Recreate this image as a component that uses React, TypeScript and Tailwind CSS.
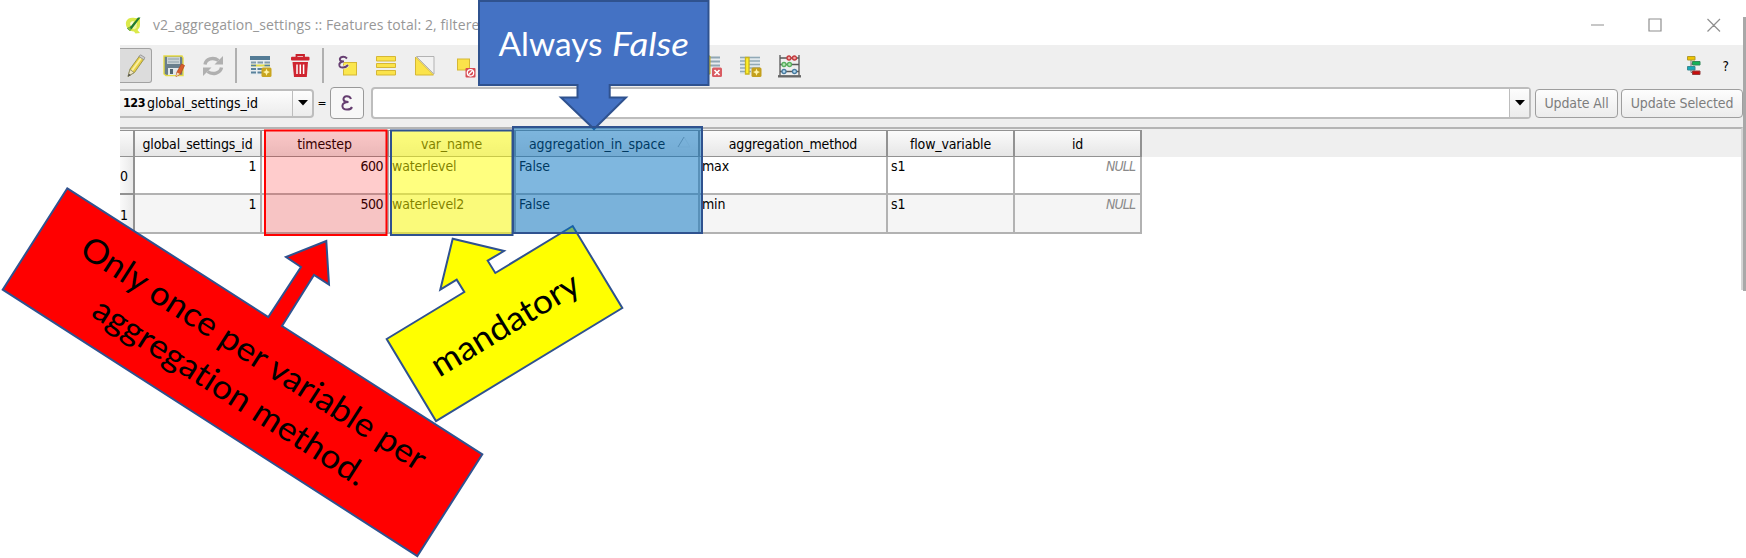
import type { ReactNode } from "react";

const UI = "font-['DejaVu_Sans_Condensed','DejaVu_Sans',sans-serif]";

function Icon({ className = "", children }: { className?: string; children: ReactNode }) {
  return (
    <svg viewBox="0 0 24 24" className={`h-6 w-6 shrink-0 ${className}`} fill="none">
      {children}
    </svg>
  );
}

function Separator({ className = "" }: { className?: string }) {
  return <div className={`h-[35px] w-[2px] shrink-0 bg-[#b0b0b0] ${className}`} />;
}

function TitleBar() {
  return (
    <div className="flex h-[45px] items-center pt-[5px]">
      <svg viewBox="0 0 16 17" className="ml-[5px] h-[17px] w-4 shrink-0">
        <path d="M1 5C2 1 6 0 10 1L15 1 15 8C15 11 13 12 12.500 13L15 16 10.500 16.500 9 14.500C4 14.500 0 10 1 5Z" fill="#dbe94a" />
        <path d="M5 7C5 5 7 4 9 4L6.500 10Z" fill="#f8fcd8" />
        <path d="M7 11 12 5 11.500 11 9 12.500Z" fill="#f0f7a0" />
        <path d="M2 11.500 6 9 13 .5 15.500 .5 7.500 11 5 14Z" fill="#1f7a34" />
        <path d="M2.500 11 5 10 6 12.500 4.500 14Z" fill="#8fc13a" />
      </svg>
      <span className="ml-[12px] whitespace-nowrap font-['Open_Sans','Noto_Sans',sans-serif] text-[14px] leading-[18px] tracking-[0.1px] text-[#979797]">
        v2_aggregation_settings :: Features total: 2, filtered
      </span>
      <svg viewBox="0 0 130 14" className="ml-auto mr-[22px] h-[14px] w-[130px]" fill="none" stroke="#8f8f8f" strokeWidth="1.2">
        <path d="M0 7H13M58 1H70V13H58ZM116.5 1 129 13.5M129 1 116.5 13.5" />
      </svg>
    </div>
  );
}

function Toolbar() {
  return (
    <div className="flex h-[41px] items-center">
      <div className="flex h-[35px] w-8 shrink-0 items-center justify-center rounded-r-[3px] border border-l-0 border-[#a2a2a2] bg-[#dcdcdc]">
        <Icon>
          <path d="M4 22.500 6 15 15.500 2 20 5 10.500 18.500Z" fill="#e6cf46" stroke="#8c8439" strokeWidth=".8" />
          <path d="M8 16.500 17.500 3.500" stroke="#f9efa0" strokeWidth="2" />
          <path d="M15 2.500 16.500 .8 20.800 3.500 19.800 5.800Z" fill="#cdcdcd" stroke="#8b8b8b" strokeWidth=".8" />
          <path d="M4 22.500 6 15.500 10 18.500Z" fill="#efe5c4" stroke="#8d8d70" strokeWidth=".8" />
          <path d="M4 22.500 4.800 19.800 6.800 21Z" fill="#444" />
        </Icon>
      </div>
      <Icon className="ml-[10px]">
        <path d="M2 2H20L21 4V21.500H4L2 20Z" fill="#697f8d" stroke="#e6db45" strokeWidth="1.400" />
        <path d="M5 3H18V10H5Z" fill="#c9d2d5" />
        <path d="M6 5H17M6 8H17" stroke="#8ea1aa" />
        <path d="M6 14H17V21H6Z" fill="#e2e8ea" />
        <path d="M8 15H11V20H8Z" fill="#52656f" />
        <path d="M14 22.500 15 18 19.500 10 22.500 11.500 18.500 20Z" fill="#d75d2b" stroke="#b64a22" strokeWidth=".8" />
        <path d="M14 22.500 15 18.500 18 20Z" fill="#f1dfb6" />
      </Icon>
      <Icon className="ml-[15px]">
        <path d="M4 10.500C5 5 12 2.500 17.500 6.500" stroke="#b0b0b0" strokeWidth="3.400" />
        <path d="M22 2V10.500H13.500Z" fill="#b0b0b0" />
        <path d="M20.500 13.500C19.500 19 12 21.500 6.500 17.500" stroke="#b0b0b0" strokeWidth="3.400" />
        <path d="M2 22V13.500H10.500Z" fill="#b0b0b0" />
      </Icon>
      <Separator className="ml-[10px]" />
      <Icon className="ml-[12px]">
        <path d="M1 2H21V21H1Z" fill="#e8edf0" />
        <path d="M1 2H21V6H1Z" fill="#547b95" />
        <path d="M2 8.500H7M8.500 8.500H14M15.500 8.500H21" stroke="#819cab" strokeWidth="1.800" />
        <path d="M2 11.500H21" stroke="#e3dc4a" strokeWidth="2" />
        <path d="M2 11.500H7M15.500 11.500H21" stroke="#59829c" strokeWidth="1.600" />
        <path d="M2 15H7M8.500 15H13M2 18.500H7M8.500 18.500H13" stroke="#59829c" strokeWidth="2.200" />
        <rect x="12.500" y="13.500" width="10" height="9.500" rx="1.500" fill="#c9a51f" />
        <path d="M17.500 14.500 18.500 17 21 18 18.500 19.200 17.500 21.800 16.500 19.200 14 18 16.500 17Z" fill="#fff4a8" />
      </Icon>
      <Icon className="ml-[15px]">
        <path d="M8.500 3V1H16V3" stroke="#c8202b" strokeWidth="1.800" />
        <rect x="3" y="2.800" width="18.500" height="3.700" rx="1" fill="#cf2530" />
        <path d="M4.500 8H20L18.800 23H6Z" fill="#cf2530" />
        <path d="M9 10.500V20M12.300 10.500V20M15.600 10.500V20" stroke="#fff" strokeWidth="1.500" />
      </Icon>
      <Separator className="ml-[10px]" />
      <Icon className="ml-[12px]">
        <rect x="7.500" y="8.500" width="13" height="12.500" fill="#fbe74e" stroke="#d5b735" />
        <path d="M11 4.500C8 1.500 3 3 4 6 4.500 7.500 6.500 7.500 8 7.500 5 7.500 2.500 9 3.500 12 4.500 14.500 9.500 14 12 11" stroke="#f0f0f0" strokeWidth="3.400" />
        <path d="M11 4.500C8 1.500 3 3 4 6 4.500 7.500 6.500 7.500 8 7.500 5 7.500 2.500 9 3.500 12 4.500 14.500 9.500 14 12 11" stroke="#673f72" strokeWidth="2" />
      </Icon>
      <Icon className="ml-[14px]">
        <path d="M2.500 2.500H21.500V7H2.500ZM2.500 9.500H21.500V13.500H2.500ZM2.500 16.500H21.500V21H2.500Z" fill="#fbe34a" stroke="#d5b735" />
      </Icon>
      <Icon className="ml-[15px]">
        <path d="M3.500 2.500H21V20Z" fill="#f2f2f2" stroke="#b3b3b3" />
        <path d="M2.500 3V21H20.500Z" fill="#fbe34a" stroke="#d5b735" />
      </Icon>
      <Icon className="ml-[17px]">
        <rect x="3.500" y="5" width="12" height="11" fill="#fbe34a" stroke="#d5b735" />
        <rect x="11.500" y="14" width="10" height="9.500" rx="1" fill="#d84b53" />
        <circle cx="16.500" cy="18.800" r="3.200" stroke="#fff" strokeWidth="1.300" />
        <path d="M14.500 20.800 18.500 16.800" stroke="#fff" strokeWidth="1.300" />
      </Icon>
      <Icon className="ml-[222px]">
        <path d="M1 2H20V21H1Z" fill="#e8edf0" />
        <path d="M9 3.500H20M9 7.500H20M9 11.500H20" stroke="#91a7b4" strokeWidth="2" />
        <path d="M6 2H10V20H6Z" fill="#fbe32e" stroke="#bda91f" />
        <rect x="12" y="13.500" width="10" height="9.500" rx="1.500" fill="#d95c62" />
        <path d="M14.500 16 19.500 21M19.500 16 14.500 21" stroke="#fff" strokeWidth="1.700" />
      </Icon>
      <Icon className="ml-[15px]">
        <path d="M1 2.500H21V20H1Z" fill="#e0e8ec" />
        <path d="M1 3.500H21M1 7H21M1 10.500H21M1 14H21M1 17.500H12" stroke="#91a9b6" strokeWidth="1.400" />
        <path d="M6.500 3.500H10V20H6.500Z" fill="#fff02b" stroke="#c8b321" strokeWidth="1.300" />
        <rect x="12.500" y="13.500" width="10" height="9.500" rx="1.500" fill="#c4a01d" />
        <path d="M17.500 14.500 18.500 17 21 18 18.500 19.200 17.500 21.800 16.500 19.200 14 18 16.500 17Z" fill="#fff4a8" />
      </Icon>
      <Icon className="ml-[14px]">
        <path d="M3 1V22M22 1V22M3 4H22M3 10.500H22M3 17.500H22" stroke="#585858" strokeWidth="1.300" />
        <path d="M1 22.300H24" stroke="#666" strokeWidth="2.400" />
        <g strokeWidth="1.300">
          <path d="M10 4a2 2 0 1 0 4 0a2 2 0 1 0-4 0M15.500 4a2 2 0 1 0 4 0a2 2 0 1 0-4 0" fill="#f2a5a5" stroke="#c3393c" />
          <path d="M5 10.500a2 2 0 1 0 4 0a2 2 0 1 0-4 0M10.500 10.500a2 2 0 1 0 4 0a2 2 0 1 0-4 0" fill="#b5eab5" stroke="#59af5e" />
          <path d="M5 17.500a2 2 0 1 0 4 0a2 2 0 1 0-4 0M15.500 17.500a2 2 0 1 0 4 0a2 2 0 1 0-4 0" fill="#b8dcf2" stroke="#487ba0" />
        </g>
      </Icon>
      <Icon className="ml-auto">
        <path d="M9 5V18.500H16M9 10H14" stroke="#777" />
        <path d="M5.500 2.500H13V6H5.500Z" fill="#efc400" stroke="#b19b2c" />
        <path d="M10.500 7.500H18V11H10.500Z" fill="#12b357" stroke="#33875a" />
        <path d="M5.500 12.500H13V16H5.500Z" fill="#16a9b8" stroke="#3b8a91" />
        <path d="M10.500 17H18V20.500H10.500Z" fill="#c80c0c" stroke="#943c3c" />
      </Icon>
      <span className={`${UI} ml-[17px] mr-[14px] text-[13.5px] leading-4 text-black`}>?</span>
    </div>
  );
}

function Caret() {
  return (
    <svg viewBox="0 0 10 6" className="h-[6px] w-[10px]">
      <path d="M0 0H10L5 5.500Z" fill="#000" />
    </svg>
  );
}

function FieldBar() {
  const grad = "bg-linear-to-b from-[#fdfdfd] to-[#ececec]";
  return (
    <div className={`${UI} flex h-[34px] items-center text-[14px]`}>
      <div className={`flex h-[29px] w-[194px] shrink-0 rounded-r-[4px] border-2 border-l-0 border-[#bdbdbd] ${grad}`}>
        <span className="flex w-[172px] items-center whitespace-nowrap pl-[3px]">
          <b className="mr-[2px] text-[12.5px] tracking-[-0.5px]">123</b>
          <span className="tracking-[-0.1px]">global_settings_id</span>
        </span>
        <span className="flex grow items-center justify-center border-l border-[#bdbdbd]">
          <Caret />
        </span>
      </div>
      <span className="ml-[2px] w-[14px] text-center text-[12px]">=</span>
      <div className="ml-[2px] flex h-[32px] w-[34px] shrink-0 items-center justify-center rounded-[4px] border border-[#999] bg-[#f7f7f7]">
        <svg viewBox="0 0 12 16" className="h-4 w-3" fill="none" stroke="#653e70" strokeWidth="2">
          <path d="M10 4C8.500 0 2 .5 2.500 4.500 2.800 6.500 5 7 7.500 7 4 7 1 8.500 1.500 11.500 2 15.500 9.500 15.500 11 12" />
        </svg>
      </div>
      <div className="ml-[7px] flex h-[32px] w-[1160px] shrink-0 rounded-[4px] border-2 border-[#bdbdbd] bg-white">
        <span className={`ml-auto flex w-[20px] items-center justify-center border-l border-[#bdbdbd] ${grad}`}>
          <Caret />
        </span>
      </div>
      <button className={`ml-[4px] h-[29px] w-[83px] shrink-0 whitespace-nowrap rounded-[4px] border-[1.5px] border-[#9e9e9e] tracking-[-0.1px] text-[#7d7d7d] ${grad}`}>
        Update All
      </button>
      <button className={`ml-[3px] h-[29px] w-[122px] shrink-0 whitespace-nowrap rounded-[4px] border-[1.5px] border-[#9e9e9e] tracking-[-0.1px] text-[#7d7d7d] ${grad}`}>
        Update Selected
      </button>
    </div>
  );
}

const columns = "grid grid-cols-[15px_127px_127px_127px_184px_188px_127px_127px]";
const headers = ["", "global_settings_id", "timestep", "var_name", "aggregation_in_space", "aggregation_method", "flow_variable", "id"];
const rows = [
  ["0", "1", "600", "waterlevel", "False", "max", "s1", "NULL"],
  ["1", "1", "500", "waterlevel2", "False", "min", "s1", "NULL"],
];

function Table() {
  return (
    <div className={`${UI} flex h-[163px] flex-col border-t-2 border-r-2 border-t-[#b5b5b5] border-r-[#d5d5d5] bg-white text-[14px] leading-4 tracking-[-0.15px] text-black`}>
      <div className="bg-[#efefef] pt-px">
        <div className={`${columns} h-[27px] w-[1022px]`}>
          {headers.map((h, i) => (
            <div key={h} className="flex items-center justify-center whitespace-nowrap border-y-[1.5px] border-r-2 border-[#929292] bg-linear-to-b from-[#fbfbfb] to-[#e6e6e6]">
              {i === 4 ? <span className="tracking-[-0.05px]">{h}</span> : h}
              {i === 4 && (
                <svg viewBox="0 0 14 12" className="-mr-[6px] mb-[4px] ml-[12px] h-3 w-[14px]" fill="none">
                  <path d="M7 1 13 11H1" stroke="#e4e4e4" />
                  <path d="M1 11 7 1" stroke="#aaa" />
                </svg>
              )}
            </div>
          ))}
        </div>
      </div>
      {rows.map((row, r) => (
        <div key={r} className={`${columns} w-[1022px] ${r === 0 ? "h-[38px]" : "h-[39px] bg-[#f5f5f5]"}`}>
          {row.map((v, c) =>
            c === 0 ? (
              <div key={c} className="flex items-center border-r-2 border-b-2 border-[#929292] bg-linear-to-r from-[#fafafa] to-[#e9e9e9] pt-[2px]">
                {v}
              </div>
            ) : (
              <div
                key={c}
                className={`border-r-2 border-b-2 border-[#b2b2b2] pt-px ${
                  c === 7 ? "pr-[5px] text-right tracking-[-0.9px] text-[#8a8a8a] italic" : c < 3 ? "pr-[4px] text-right tracking-[-0.5px]" : c === 5 ? "pl-[2px]" : "pl-[3px]"
                }`}
              >
                {v}
              </div>
            ),
          )}
        </div>
      ))}
    </div>
  );
}

function Annotations() {
  const outline = { stroke: "#2f528f", strokeWidth: 2 };
  return (
    <svg viewBox="0 0 1746 558" className="pointer-events-none absolute inset-0 h-[558px] w-[1746px] font-[Lato,sans-serif] text-[33.5px] [font-variant-ligatures:none]">
      <rect x="265" y="130.500" width="121.500" height="104.500" fill="#ff0000" fillOpacity=".2" stroke="#ff0000" strokeWidth="2" />
      <rect x="391" y="130.500" width="121.500" height="104.500" fill="#ffff00" fillOpacity=".5" {...outline} />
      <path d="M67.300 188.300 268.300 317 301 267 286 257 326.300 241 329 284.700 314 275 282 326 482.300 454.300 417.300 556 2.700 289.700Z" fill="#ff0000" {...outline} />
      <path d="M386.700 339 464.300 292 456.700 279.700 440.300 289.700 452.700 238.700 504 251 487.700 260.700 495.300 273 572.700 226 622.300 308 436 421Z" fill="#ffff00" {...outline} />
      <path d="M479 1H708.500V85H609.700V97.500H626L594 129 561 97.500H577.500V85H479Z" fill="#4472c4" {...outline} />
      <rect x="513" y="127" width="189" height="106" fill="#0070c0" fillOpacity=".5" {...outline} />
      <g transform="translate(80.100 255.700) rotate(32.660)">
        <text x="-2.500" y="0" textLength="403" lengthAdjust="spacingAndGlyphs">Only once per variable per</text>
      </g>
      <g transform="translate(91.600 316.600) rotate(32.660)">
        <text x="-2" y="0" textLength="318" lengthAdjust="spacingAndGlyphs">aggregation method.</text>
      </g>
      <g transform="translate(439.500 376.500) rotate(-31.280)">
        <text x="-1" y="1" textLength="168" lengthAdjust="spacingAndGlyphs">mandatory</text>
      </g>
      <text x="498.500" y="55.500" textLength="104" lengthAdjust="spacingAndGlyphs" fill="#fff">Always</text>
      <text x="612" y="55.500" textLength="77" lengthAdjust="spacingAndGlyphs" fill="#fff" fontStyle="italic">False</text>
    </svg>
  );
}

export default function App() {
  return (
    <div className="relative h-[558px] w-[1746px] overflow-hidden bg-white">
      <div className="ml-[120px] flex h-[291px] w-[1626px]">
        <div className="flex w-[1623px] flex-col">
          <TitleBar />
          <div className="h-[82px] bg-[#efefef]">
            <Toolbar />
            <FieldBar />
          </div>
          <Table />
        </div>
        <div className="mt-[17px] w-[3px] bg-[#a8a8a8]" />
      </div>
      <Annotations />
    </div>
  );
}
